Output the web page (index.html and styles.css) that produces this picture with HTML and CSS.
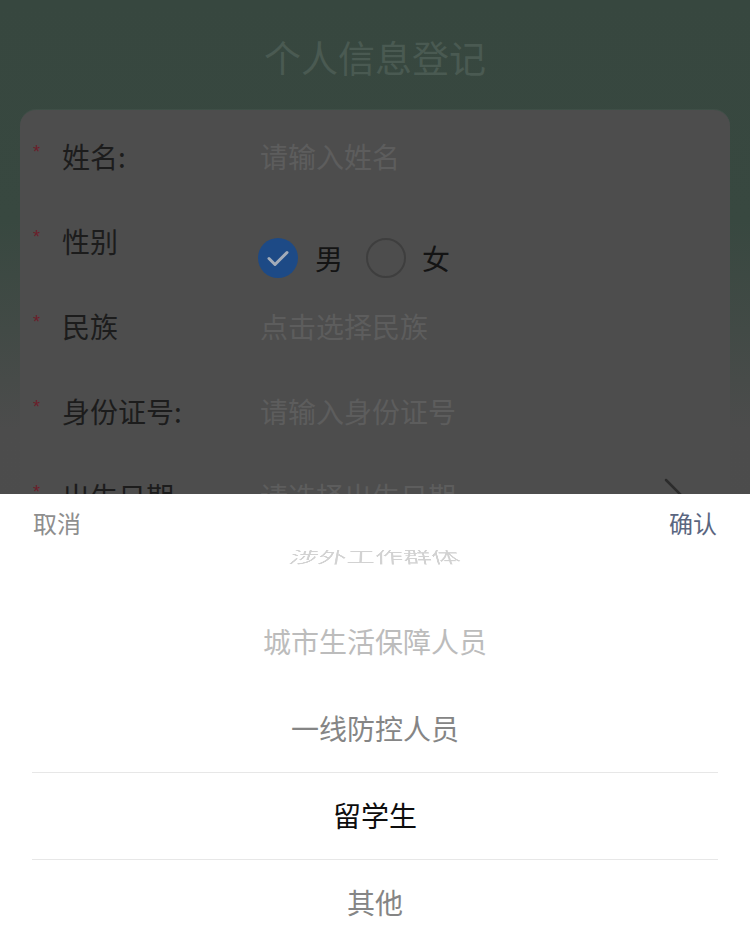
FILE: index.html
```html
<!DOCTYPE html>
<html lang="zh-CN">
<head>
<meta charset="utf-8">
<title>个人信息登记</title>
<link rel="stylesheet" href="styles.css">
</head>
<body>
<div class="page">
  <h1 class="title">个人信息登记</h1>
  <div class="card">
    <div class="row">
      <span class="req">*</span>
      <span class="label">姓名:</span>
      <span class="ph">请输入姓名</span>
    </div>
    <div class="row">
      <span class="req">*</span>
      <span class="label">性别</span>
      <div class="radios">
        <span class="radio checked">
          <svg viewBox="0 0 40 40" width="40" height="40"><circle cx="20" cy="20" r="20" fill="#1d4a86"/><path d="M11 20.5l6 6 12-12" fill="none" stroke="#a3acb9" stroke-width="3" stroke-linecap="round" stroke-linejoin="round"/></svg>
        </span>
        <span class="rtext">男</span>
        <span class="radio">
          <svg viewBox="0 0 40 40" width="40" height="40"><circle cx="20" cy="20" r="19" fill="none" stroke="#3e3e3e" stroke-width="2"/></svg>
        </span>
        <span class="rtext last">女</span>
      </div>
    </div>
    <div class="row">
      <span class="req">*</span>
      <span class="label">民族</span>
      <span class="ph">点击选择民族</span>
    </div>
    <div class="row">
      <span class="req">*</span>
      <span class="label">身份证号:</span>
      <span class="ph">请输入身份证号</span>
    </div>
    <div class="row">
      <span class="req">*</span>
      <span class="label">出生日期</span>
      <span class="ph">请选择出生日期</span>
      <svg class="chev" viewBox="0 0 20 32" width="20" height="32"><path d="M3 2l14 14-14 14" fill="none" stroke="#2c2c2c" stroke-width="2.5" stroke-linecap="round"/></svg>
    </div>
  </div>
</div>

<div class="sheet">
  <div class="sheet-head">
    <span class="cancel">取消</span>
    <span class="confirm">确认</span>
  </div>
  <div class="picker">
    <ul class="column">
      <li class="opt far">涉外工作群体</li>
      <li class="opt near2">城市生活保障人员</li>
      <li class="opt near1">一线防控人员</li>
      <li class="opt sel">留学生</li>
      <li class="opt near1">其他</li>
    </ul>
    <div class="frame"></div>
  </div>
</div>
</body>
</html>
```

FILE: styles.css
```css
html, body {
  margin: 0;
  padding: 0;
}
body {
  width: 750px;
  height: 932px;
  overflow: hidden;
  font-family: "Noto Sans CJK SC", "Noto Sans", sans-serif;
  background: linear-gradient(180deg, #37473f 0px, #384840 220px, #424a46 330px, #4c4c4c 430px, #4d4d4d 932px);
}
.page {
  padding-top: 32px;
}
.title {
  margin: 0;
  height: 50px;
  line-height: 50px;
  text-align: center;
  font-size: 37px;
  font-weight: 400;
  color: #4a5a52;
}
.card {
  margin: 28px 20px 0;
  background: #4d4d4d;
  border-radius: 16px;
  padding-top: 3px;
  height: 760px;
  box-shadow: 0 -1px 0 rgba(255,255,255,0.04);
}
.row {
  display: flex;
  align-items: center;
  height: 85px;
  padding-left: 13px;
}
.req {
  width: 29px;
  font-family: "Liberation Sans", sans-serif;
  font-size: 18px;
  color: #6c1d2a;
  margin-top: -6px;
}
.label {
  width: 198px;
  font-size: 28px;
  color: #1c1c1c;
}
.ph {
  font-size: 28px;
  color: #5d5d5d;
}
.radios {
  display: flex;
  align-items: center;
  margin-top: 34px;
  margin-left: -2px;
}
.radio {
  display: flex;
  width: 40px;
  height: 40px;
}
.rtext {
  font-size: 28px;
  color: #141414;
  margin-left: 17px;
  margin-right: 23px;
}
.rtext.last {
  margin-left: 16px;
}
.chev {
  margin-left: auto;
  margin-right: 47px;
  margin-top: -3px;
}
.sheet {
  position: fixed;
  left: 0;
  right: 0;
  bottom: 0;
  height: 438px;
  background: #fff;
}
.sheet-head {
  height: 56px;
  display: flex;
  justify-content: space-between;
  align-items: center;
  padding: 0 33px 0 33px;
  font-size: 24px;
}
.cancel {
  color: #8e8e8e;
  margin-top: 1px;
}
.confirm {
  color: #5a6680;
  margin-top: 1px;
}
.picker {
  position: relative;
  height: 382px;
  overflow: hidden;
}
.column {
  list-style: none;
  margin: -37px 0 0;
  padding: 0;
}
.opt {
  height: 87px;
  line-height: 87px;
  text-align: center;
  font-size: 28px;
}
.column .far {
  height: 85px;
  color: #d2d2d2;
  transform: perspective(300px) rotateX(55deg);
}
.near2 {
  color: #bcbcbc;
}
.near1 {
  color: #858585;
}
.sel {
  color: #0d0d0d;
}
.frame {
  position: absolute;
  left: 32px;
  right: 32px;
  top: 222px;
  height: 86px;
  border-top: 1px solid #e7e7e7;
  border-bottom: 1px solid #e7e7e7;
  pointer-events: none;
}
```
